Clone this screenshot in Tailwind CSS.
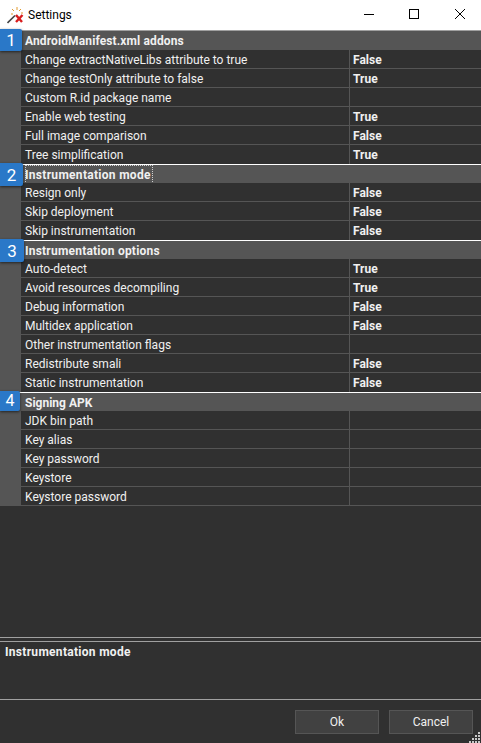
<!DOCTYPE html>
<html>
<head>
<meta charset="utf-8">
<title>Settings</title>
<script src="https://cdn.jsdelivr.net/npm/@tailwindcss/browser@4"></script>
</head>
<body class="bg-[#303030] font-['Roboto','Open_Sans',sans-serif] text-[12px] leading-[20px] text-[#f0f0f0] overflow-hidden">
<div class="relative flex flex-col h-[743px] w-[481px]">

  <!-- title bar -->
  <div class="flex items-center h-[30px] bg-white text-black shrink-0">
    <svg class="ml-[7px] w-[17px] h-[17px]" viewBox="0 0 17 17">
      <path d="M0.500 16 L8 8.500" stroke="#444" stroke-width="1.600"/>
      <path d="M10 0v3M5 2l2 2M14 2l-2 2M4 7h2M14 6h2" stroke="#e09a30" stroke-width="1"/>
      <path d="M9 8l6 7M15.500 8l-6.500 7" stroke="#d81e1e" stroke-width="2.400"/>
    </svg>
    <span class="ml-[4px]">Settings</span>
    <div class="ml-auto flex items-center h-full">
      <svg class="w-[46px] h-[30px]" viewBox="0 0 46 30"><path d="M21 14.500h10" stroke="#000"/></svg>
      <svg class="w-[46px] h-[30px]" viewBox="0 0 46 30"><rect x="20.500" y="9.500" width="9" height="9" fill="none" stroke="#000"/></svg>
      <svg class="w-[46px] h-[30px]" viewBox="0 0 46 30"><path d="M20 9l10 10M30 9l-10 10" stroke="#000"/></svg>
    </div>
  </div>

  <!-- property grid -->
  <div class="shrink-0 border-t border-[#a0a0a0]">
    <div class="h-[19px] bg-[#555555] font-bold pl-[25px] leading-[21px] tracking-[0.12px]">AndroidManifest.xml addons</div>
    <div class="flex h-[19px] bg-[#555555]"><div class="w-[21px]"></div><div class="flex flex-1 bg-[#303030] border-b border-[#555555]"><div class="w-[328px] pl-[4px]">Change extractNativeLibs attribute to true</div><div class="flex-1 border-l border-[#555555] pl-[3px] font-bold">False</div></div></div>
    <div class="flex h-[19px] bg-[#555555]"><div class="w-[21px]"></div><div class="flex flex-1 bg-[#303030] border-b border-[#555555]"><div class="w-[328px] pl-[4px]">Change testOnly attribute to false</div><div class="flex-1 border-l border-[#555555] pl-[3px] font-bold">True</div></div></div>
    <div class="flex h-[19px] bg-[#555555]"><div class="w-[21px]"></div><div class="flex flex-1 bg-[#303030] border-b border-[#555555]"><div class="w-[328px] pl-[4px]">Custom R.id package name</div><div class="flex-1 border-l border-[#555555] pl-[3px] font-bold"></div></div></div>
    <div class="flex h-[19px] bg-[#555555]"><div class="w-[21px]"></div><div class="flex flex-1 bg-[#303030] border-b border-[#555555]"><div class="w-[328px] pl-[4px]">Enable web testing</div><div class="flex-1 border-l border-[#555555] pl-[3px] font-bold">True</div></div></div>
    <div class="flex h-[19px] bg-[#555555]"><div class="w-[21px]"></div><div class="flex flex-1 bg-[#303030] border-b border-[#555555]"><div class="w-[328px] pl-[4px]">Full image comparison</div><div class="flex-1 border-l border-[#555555] pl-[3px] font-bold">False</div></div></div>
    <div class="flex h-[19px] bg-[#555555]"><div class="w-[21px]"></div><div class="flex flex-1 bg-[#303030]"><div class="w-[328px] pl-[4px]">Tree simplification</div><div class="flex-1 border-l border-[#555555] pl-[3px] font-bold">True</div></div></div>

    <div class="h-[19px] bg-[#555555] font-bold pl-[25px] border-t border-white leading-[18px]"><span class="inline-block pt-px pl-0 pr-[2px] tracking-[0.3px] outline-1 outline-dotted outline-[#d0d0d0] -outline-offset-1">Instrumentation mode</span></div>
    <div class="flex h-[19px] bg-[#555555]"><div class="w-[21px]"></div><div class="flex flex-1 bg-[#303030] border-b border-[#555555]"><div class="w-[328px] pl-[4px]">Resign only</div><div class="flex-1 border-l border-[#555555] pl-[3px] font-bold">False</div></div></div>
    <div class="flex h-[19px] bg-[#555555]"><div class="w-[21px]"></div><div class="flex flex-1 bg-[#303030] border-b border-[#555555]"><div class="w-[328px] pl-[4px]">Skip deployment</div><div class="flex-1 border-l border-[#555555] pl-[3px] font-bold">False</div></div></div>
    <div class="flex h-[19px] bg-[#555555]"><div class="w-[21px]"></div><div class="flex flex-1 bg-[#303030]"><div class="w-[328px] pl-[4px]">Skip instrumentation</div><div class="flex-1 border-l border-[#555555] pl-[3px] font-bold">False</div></div></div>

    <div class="h-[19px] bg-[#555555] font-bold pl-[25px] border-t border-white leading-[20px] tracking-[0.22px]">Instrumentation options</div>
    <div class="flex h-[19px] bg-[#555555]"><div class="w-[21px]"></div><div class="flex flex-1 bg-[#303030] border-b border-[#555555]"><div class="w-[328px] pl-[4px]">Auto-detect</div><div class="flex-1 border-l border-[#555555] pl-[3px] font-bold">True</div></div></div>
    <div class="flex h-[19px] bg-[#555555]"><div class="w-[21px]"></div><div class="flex flex-1 bg-[#303030] border-b border-[#555555]"><div class="w-[328px] pl-[4px]">Avoid resources decompiling</div><div class="flex-1 border-l border-[#555555] pl-[3px] font-bold">True</div></div></div>
    <div class="flex h-[19px] bg-[#555555]"><div class="w-[21px]"></div><div class="flex flex-1 bg-[#303030] border-b border-[#555555]"><div class="w-[328px] pl-[4px]">Debug information</div><div class="flex-1 border-l border-[#555555] pl-[3px] font-bold">False</div></div></div>
    <div class="flex h-[19px] bg-[#555555]"><div class="w-[21px]"></div><div class="flex flex-1 bg-[#303030] border-b border-[#555555]"><div class="w-[328px] pl-[4px]">Multidex application</div><div class="flex-1 border-l border-[#555555] pl-[3px] font-bold">False</div></div></div>
    <div class="flex h-[19px] bg-[#555555]"><div class="w-[21px]"></div><div class="flex flex-1 bg-[#303030] border-b border-[#555555]"><div class="w-[328px] pl-[4px]">Other instrumentation flags</div><div class="flex-1 border-l border-[#555555] pl-[3px] font-bold"></div></div></div>
    <div class="flex h-[19px] bg-[#555555]"><div class="w-[21px]"></div><div class="flex flex-1 bg-[#303030] border-b border-[#555555]"><div class="w-[328px] pl-[4px]">Redistribute smali</div><div class="flex-1 border-l border-[#555555] pl-[3px] font-bold">False</div></div></div>
    <div class="flex h-[19px] bg-[#555555]"><div class="w-[21px]"></div><div class="flex flex-1 bg-[#303030]"><div class="w-[328px] pl-[4px]">Static instrumentation</div><div class="flex-1 border-l border-[#555555] pl-[3px] font-bold">False</div></div></div>

    <div class="h-[19px] bg-[#555555] font-bold pl-[25px] border-t border-white leading-[20px]">Signing APK</div>
    <div class="flex h-[19px] bg-[#555555]"><div class="w-[21px]"></div><div class="flex flex-1 bg-[#303030] border-b border-[#555555]"><div class="w-[328px] pl-[4px]">JDK bin path</div><div class="flex-1 border-l border-[#555555]"></div></div></div>
    <div class="flex h-[19px] bg-[#555555]"><div class="w-[21px]"></div><div class="flex flex-1 bg-[#303030] border-b border-[#555555]"><div class="w-[328px] pl-[4px]">Key alias</div><div class="flex-1 border-l border-[#555555]"></div></div></div>
    <div class="flex h-[19px] bg-[#555555]"><div class="w-[21px]"></div><div class="flex flex-1 bg-[#303030] border-b border-[#555555]"><div class="w-[328px] pl-[4px]">Key password</div><div class="flex-1 border-l border-[#555555]"></div></div></div>
    <div class="flex h-[19px] bg-[#555555]"><div class="w-[21px]"></div><div class="flex flex-1 bg-[#303030] border-b border-[#555555]"><div class="w-[328px] pl-[4px]">Keystore</div><div class="flex-1 border-l border-[#555555]"></div></div></div>
    <div class="flex h-[19px] bg-[#555555]"><div class="w-[21px]"></div><div class="flex flex-1 bg-[#303030] border-b border-[#555555]"><div class="w-[328px] pl-[4px]">Keystore password</div><div class="flex-1 border-l border-[#555555]"></div></div></div>
  </div>

  <!-- empty grid area -->
  <div class="flex-1"></div>

  <!-- description -->
  <div class="shrink-0 h-[59px] border-y border-[#a0a0a0] relative before:absolute before:left-0 before:right-0 before:-top-[5px] before:h-px before:bg-[#a0a0a0]">
    <div class="pl-[5px] font-bold tracking-[0.3px]">Instrumentation mode</div>
  </div>

  <!-- buttons -->
  <div class="shrink-0 h-[43px] flex justify-end gap-[10px] pt-[10px] pr-[8px]">
    <button class="w-[84px] h-[24px] bg-[#414141] border border-[#555555] text-[#f0f0f0]">Ok</button>
    <button class="w-[84px] h-[24px] bg-[#414141] border border-[#555555] text-[#f0f0f0]">Cancel</button>
  </div>

  <!-- numbered step badges -->
  <div class="absolute left-0 top-[29px] w-[22px] h-[22px] rounded-r-[2px] bg-[#2a78c8] shadow-[0_1px_3px_rgba(0,0,0,0.6)] flex items-center justify-center text-white text-[17px]">1</div>
  <div class="absolute left-0 top-[163px] w-[23px] h-[23px] rounded-r-[2px] bg-[#2a78c8] shadow-[0_1px_3px_rgba(0,0,0,0.6)] flex items-center justify-center text-white text-[17px]">2</div>
  <div class="absolute left-0 top-[239px] w-[24px] h-[23px] rounded-r-[2px] bg-[#2a78c8] shadow-[0_1px_3px_rgba(0,0,0,0.6)] flex items-center justify-center text-white text-[17px]">3</div>
  <div class="absolute left-0 top-[391px] w-[20px] h-[20px] rounded-r-[2px] bg-[#2a78c8] shadow-[0_1px_3px_rgba(0,0,0,0.6)] flex items-center justify-center text-white text-[16px]">4</div>

  <!-- resize grip -->
  <svg class="absolute right-0 bottom-0 w-[12px] h-[12px]" viewBox="0 0 12 12" fill="#c8c8c8">
    <rect x="9" y="1" width="2" height="2"/>
    <rect x="6" y="4" width="2" height="2"/><rect x="9" y="4" width="2" height="2"/>
    <rect x="3" y="7" width="2" height="2"/><rect x="6" y="7" width="2" height="2"/><rect x="9" y="7" width="2" height="2"/>
    <rect x="0" y="10" width="2" height="2"/><rect x="3" y="10" width="2" height="2"/><rect x="6" y="10" width="2" height="2"/><rect x="9" y="10" width="2" height="2"/>
  </svg>
</div>
</body>
</html>
